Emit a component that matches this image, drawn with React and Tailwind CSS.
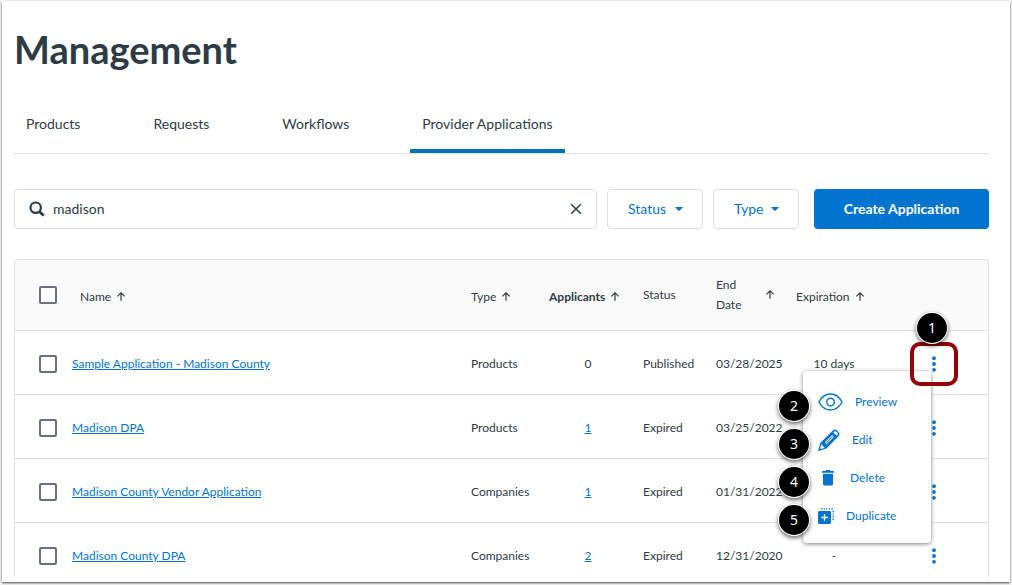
import React, { useState } from 'react';

const tabs = ['Products', 'Requests', 'Workflows', 'Provider Applications'];

const applications = [
  { name: 'Sample Application - Madison County', type: 'Products', applicants: 0, status: 'Published', endDate: '03/28/2025', expiration: '10 days' },
  { name: 'Madison DPA', type: 'Products', applicants: 1, status: 'Expired', endDate: '03/25/2022', expiration: '-' },
  { name: 'Madison County Vendor Application', type: 'Companies', applicants: 1, status: 'Expired', endDate: '01/31/2022', expiration: '-' },
  { name: 'Madison County DPA', type: 'Companies', applicants: 2, status: 'Expired', endDate: '12/31/2020', expiration: '-' },
];

const SearchIcon = () => (
  <svg className="w-4 h-4 shrink-0" viewBox="0 0 16 16" fill="none" stroke="#2d3b45" aria-hidden="true">
    <circle cx="6.7" cy="6.7" r="5.2" strokeWidth="2.2" />
    <path d="M10.4 10.4L14.6 14.6" strokeWidth="2.8" />
  </svg>
);

const CloseIcon = () => (
  <svg className="w-3 h-3" viewBox="0 0 12 12" fill="none" stroke="#2d3b45" strokeWidth="1.5" aria-hidden="true">
    <path d="M1.2 1.2L10.8 10.8M10.8 1.2L1.2 10.8" />
  </svg>
);

const CaretIcon = () => (
  <svg className="w-2 h-2 pointer-events-none" viewBox="0 0 8 8" fill="#0374cd" aria-hidden="true">
    <path d="M0.5 2h7q.6 0 .2.5L4.4 5.8q-.4.4-.8 0L.3 2.5Q-.1 2 .5 2z" />
  </svg>
);

const ArrowUpIcon = () => (
  <svg className="w-2 h-2.5 shrink-0" viewBox="0 0 8 10" fill="none" stroke="currentColor" strokeWidth="1.2" aria-hidden="true">
    <path d="M4 8.7V0.9M0.4 4.4L4 0.8L7.600 4.400" />
  </svg>
);

const DotsIcon = () => (
  <svg className="w-1 h-4" viewBox="0 0 4 16" fill="#0374cd" aria-hidden="true">
    <circle cx="2" cy="2.2" r="1.9" />
    <circle cx="2" cy="8" r="1.9" />
    <circle cx="2" cy="13.8" r="1.9" />
  </svg>
);

const EyeIcon = () => (
  <svg className="w-[25px] h-[18px]" viewBox="0 0 25 18" fill="none" stroke="#0374cd" strokeWidth="1.4" aria-hidden="true">
    <path d="M0.9 9C3.6 4 7.6 1 12.5 1s8.9 3 11.6 8c-2.7 5-6.7 8-11.6 8S3.6 14 0.9 9z" />
    <circle cx="12.5" cy="9" r="3.8" />
  </svg>
);

const PencilIcon = () => (
  <svg className="w-[22px] h-[22px]" viewBox="0 0 22 22" aria-hidden="true">
    <path d="M0.3 21.7L2.3 14L14.6 1.8Q16.9-.6 19.2 1.7L20.4 2.9Q22.6 5.2 20.3 7.4L8.1 19.7z" fill="#0374cd" />
    <path d="M3.3 15.3L6.8 18.9L2.2 20z" fill="#fff" />
    <path d="M16.2 2.5Q17.3 1.7 18.3 2.7L19.4 3.8Q20.4 4.8 19.5 5.9L18.6 6.8L15.2 3.4z" fill="#fff" />
    <path d="M6.7 13.4L14.1 6L15.9 7.8L8.5 15.2z" fill="#fff" />
    <path d="M7.9 14L14.7 7.2" stroke="#0374cd" strokeWidth="0.9" />
    <path d="M0.3 21.7L1.1 18.5L3.4 20.9z" fill="#0374cd" />
  </svg>
);

const TrashIcon = () => (
  <svg className="w-5 h-4" viewBox="0 0 20 16" fill="#0374cd" aria-hidden="true">
    <path d="M4 1h3.3l.9-.9h3.600l.9.9H16v1.7H4z" />
    <path d="M5 3.7h10v10.2q0 1.600-1.600 1.600H6.6Q5 15.5 5 13.9z" />
  </svg>
);

const DuplicateIcon = () => (
  <svg className="w-4 h-4" viewBox="0 0 16 16" aria-hidden="true">
    <rect y="3" width="13" height="13" rx="1.4" fill="#0374cd" />
    <path d="M6.5 6.2v6.6M3.2 9.5h6.6" stroke="#fff" strokeWidth="1.3" />
    <path d="M3 0.8H16" stroke="#0374cd" strokeWidth="1.3" strokeDasharray="1.4 1.2" />
    <path d="M15.2 2.8V13.5" stroke="#0374cd" strokeWidth="1.3" strokeDasharray="1.4 1.2" />
  </svg>
);

const menuItems = [
  { label: 'Preview', icon: <EyeIcon /> },
  { label: 'Edit', icon: <PencilIcon /> },
  { label: 'Delete', icon: <TrashIcon /> },
  { label: 'Duplicate', icon: <DuplicateIcon /> },
];

const StepBadge = ({ number }) => (
  <span className="flex items-center justify-center w-[30px] h-[30px] rounded-full bg-black text-white text-sm font-['Noto_Sans',sans-serif] shadow-[0_0_0_1px_#fff,0_2px_4px_1px_rgba(0,0,0,0.6)]">
    {number}
  </span>
);

const Checkbox = ({ label }) => (
  <input
    type="checkbox"
    aria-label={label}
    className="block appearance-none w-[18px] h-[18px] ml-6 border-2 border-[#6b7080] rounded-xs bg-white checked:bg-[#0374cd]"
  />
);

const SortButton = ({ label, className = '' }) => (
  <button className={`flex items-center gap-1.5 text-left leading-5 ${className}`}>
    {label}
    <ArrowUpIcon />
  </button>
);

const FilterSelect = ({ label, className }) => (
  <div className={`relative h-10 ${className}`}>
    <select aria-label={label} className="appearance-none w-full h-full pl-5 border border-[#dfe1e3] rounded bg-white text-sm text-[#0374cd]">
      <option>{label}</option>
    </select>
    <span className="absolute inset-y-0 right-5 flex items-center pointer-events-none">
      <CaretIcon />
    </span>
  </div>
);

const RowMenu = () => (
  <div className="absolute right-[57px] top-10 w-32 pt-3 pb-2 rounded bg-white shadow-[0_1px_4px_rgba(0,0,0,0.5)]">
    <ul>
      {menuItems.map((item) => (
        <li key={item.label}>
          <button className="flex items-center gap-3 w-full h-[38px] pl-[15px] text-xs text-[#0374cd]">
            {item.icon}
            {item.label}
          </button>
        </li>
      ))}
    </ul>
    <div className="absolute -left-6 top-5 bottom-2 flex flex-col justify-between">
      {menuItems.map((item, index) => (
        <StepBadge key={item.label} number={index + 2} />
      ))}
    </div>
  </div>
);

export default function App() {
  const [activeTab, setActiveTab] = useState('Provider Applications');
  const [query, setQuery] = useState('madison');

  return (
    <div className="h-screen pt-px px-0.5 pb-[3px] bg-[#f4f4f4] text-[#2d3b45] font-[Lato,sans-serif]">
      <main className="flex flex-col h-full pl-3 pr-[21px] pb-[5px] bg-white shadow-[0_1px_2px_rgba(0,0,0,0.7)]">
        <h1 className="pt-6 text-[38px] leading-[48px] font-bold">Management</h1>

        {/* Tabs */}
        <nav className="flex gap-[49px] mt-5 border-b border-[#dfe1e3]">
          {tabs.map((tab) => (
            <button
              key={tab}
              onClick={() => setActiveTab(tab)}
              className={`h-[60px] px-3 pt-1.5 text-sm border-b-4 ${activeTab === tab ? 'border-[#0374b5]' : 'border-transparent'}`}
            >
              {tab}
            </button>
          ))}
        </nav>

        {/* Search and filters */}
        <div className="flex gap-2.5 mt-[35px]">
          <div className="flex flex-1 items-center gap-2 h-10 px-3.5 border border-[#dfe1e3] rounded">
            <SearchIcon />
            <input
              type="text"
              aria-label="Search applications"
              value={query}
              onChange={(e) => setQuery(e.target.value)}
              className="flex-1 min-w-0 text-sm outline-none"
            />
            <button aria-label="Clear search" onClick={() => setQuery('')}>
              <CloseIcon />
            </button>
          </div>
          <FilterSelect label="Status" className="w-24" />
          <FilterSelect label="Type" className="w-[86px]" />
          <button className="w-[175px] h-10 ml-[5px] rounded bg-[#0374cd] text-white text-sm font-bold">
            Create Application
          </button>
        </div>

        {/* Applications */}
        <div className="flex-1 min-h-0 mt-[30px] overflow-hidden border border-b-0 border-[#dfe1e3] rounded-t">
          <table className="w-full table-fixed text-xs text-left">
            <colgroup>
              <col className="w-[57px]" />
              <col />
              <col className="w-[78px]" />
              <col className="w-[94px]" />
              <col className="w-[73px]" />
              <col className="w-[80px]" />
              <col className="w-[76px]" />
              <col className="w-[116px]" />
            </colgroup>
            <thead className="bg-[#fafafa]">
              <tr className="h-[70px] border-b border-[#dfe1e3]">
                <th><Checkbox label="Select all" /></th>
                <th className="font-normal"><SortButton label="Name" className="pl-2 pt-1" /></th>
                <th className="font-normal"><SortButton label="Type" className="pt-1" /></th>
                <th className="font-bold"><SortButton label="Applicants" className="pt-1" /></th>
                <th className="font-normal">Status</th>
                <th className="font-normal"><SortButton label={<span className="w-11">End<br />Date</span>} /></th>
                <th className="font-normal"><SortButton label="Expiration" className="pt-1" /></th>
                <th aria-label="Actions"></th>
              </tr>
            </thead>
            <tbody>
              {applications.map((app, index) => (
                <tr key={app.name} className="h-16 border-b border-[#dfe1e3]">
                  <td className="pt-1"><Checkbox label={`Select ${app.name}`} /></td>
                  <td className="pt-1"><a href="#" className="text-[#0374cd] underline">{app.name}</a></td>
                  <td className="pt-1">{app.type}</td>
                  <td className="pt-1 pr-4 text-center">
                    {app.applicants > 0 ? <a href="#" className="text-[#0374cd] underline">{app.applicants}</a> : app.applicants}
                  </td>
                  <td className="pt-1">{app.status}</td>
                  <td className="pt-1">{app.endDate}</td>
                  <td className="pt-1 text-center">{app.expiration}</td>
                  <td className="relative pt-1">
                    {index === 0 && <RowMenu />}
                    <button
                      aria-label={`Actions for ${app.name}`}
                      className={`flex items-center justify-center w-12 h-11 ml-[38px] border-4 rounded-[10px] ${index === 0 ? 'relative border-[#930209]' : 'border-transparent'}`}
                    >
                      <DotsIcon />
                    </button>
                    {index === 0 && (
                      <div className="absolute left-[45px] -top-[18px]">
                        <StepBadge number={1} />
                      </div>
                    )}
                  </td>
                </tr>
              ))}
            </tbody>
          </table>
        </div>
      </main>
    </div>
  );
}
